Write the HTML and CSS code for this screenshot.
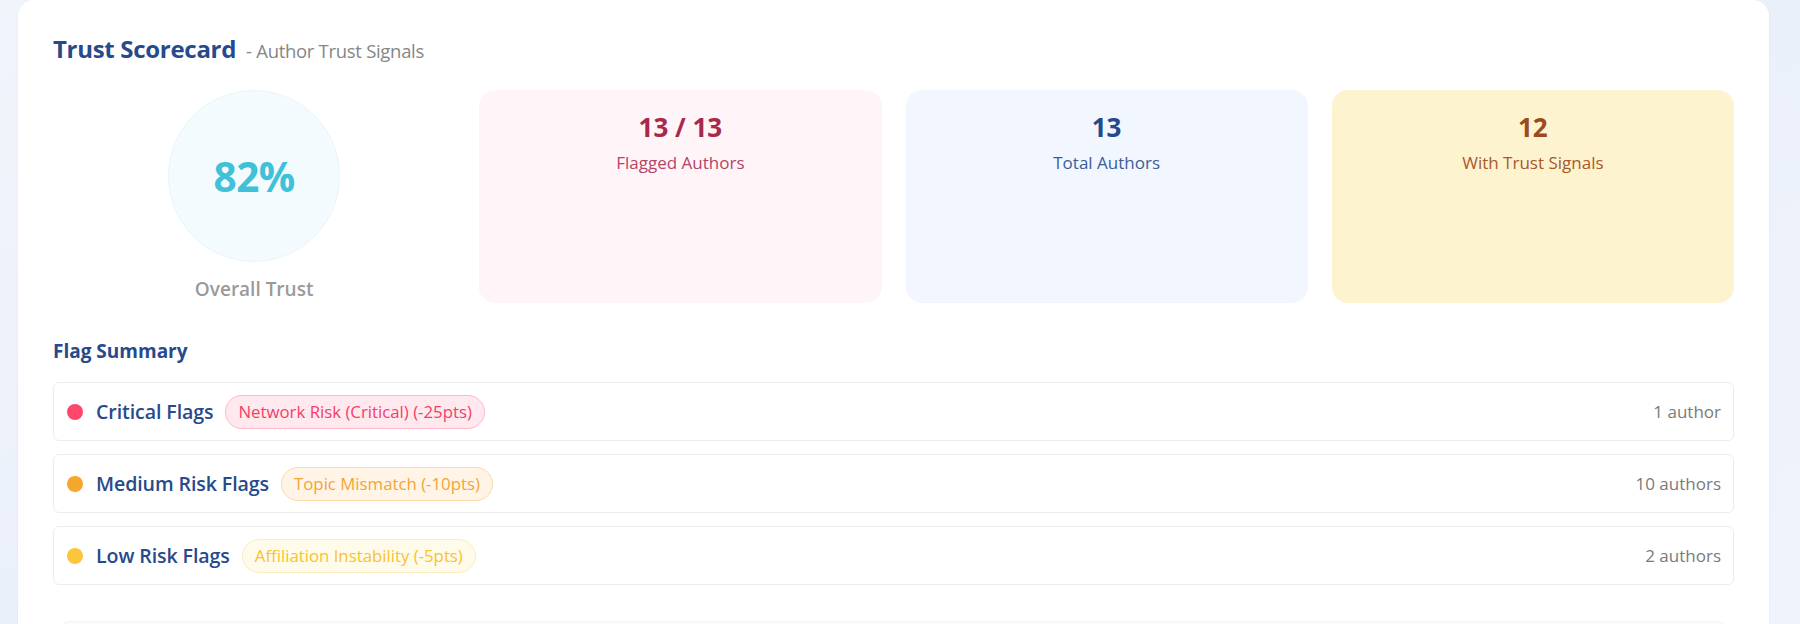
FILE: index.html
```html
<!DOCTYPE html>
<html lang="en">
<head>
<meta charset="utf-8">
<title>Trust Scorecard</title>
<link rel="stylesheet" href="styles.css">
</head>
<body>
<div class="page">
  <section class="card">
    <header class="card-head">
      <h2 class="title">Trust Scorecard</h2>
      <span class="subtitle">- Author Trust Signals</span>
    </header>

    <div class="stats">
      <div class="overall">
        <div class="ring"><span class="ring-value">82%</span></div>
        <div class="overall-label">Overall Trust</div>
      </div>
      <div class="stat stat-pink">
        <div class="stat-num">13 / 13</div>
        <div class="stat-label">Flagged Authors</div>
      </div>
      <div class="stat stat-blue">
        <div class="stat-num">13</div>
        <div class="stat-label">Total Authors</div>
      </div>
      <div class="stat stat-yellow">
        <div class="stat-num">12</div>
        <div class="stat-label">With Trust Signals</div>
      </div>
    </div>

    <h3 class="section-title">Flag Summary</h3>
    <div class="flags">
      <div class="flag-row">
        <span class="dot dot-critical"></span>
        <span class="flag-name">Critical Flags</span>
        <span class="badge badge-critical">Network Risk (Critical) (-25pts)</span>
        <span class="flag-count">1 author</span>
      </div>
      <div class="flag-row">
        <span class="dot dot-medium"></span>
        <span class="flag-name">Medium Risk Flags</span>
        <span class="badge badge-medium">Topic Mismatch (-10pts)</span>
        <span class="flag-count">10 authors</span>
      </div>
      <div class="flag-row">
        <span class="dot dot-low"></span>
        <span class="flag-name">Low Risk Flags</span>
        <span class="badge badge-low">Affiliation Instability (-5pts)</span>
        <span class="flag-count">2 authors</span>
      </div>
    </div>

    <div class="next-block"></div>
  </section>
</div>
</body>
</html>
```

FILE: styles.css
```css
* { box-sizing: border-box; }

html, body {
  margin: 0;
  padding: 0;
  height: 100%;
  overflow: hidden;
}

body {
  font-family: "Open Sans", "Noto Sans", sans-serif;
  background: linear-gradient(160deg, #f1f4fb 0%, #eaf0fa 50%, #f0f3fb 100%);
  color: #333;
}

.page {
  padding: 0 31px 0 18px;
}

.card {
  background: #fff;
  border-radius: 16px;
  padding: 34px 35px 0 35px;
  height: 700px;
  box-shadow: 0 1px 3px rgba(40, 70, 140, 0.05);
}

.card-head {
  display: flex;
  align-items: baseline;
  gap: 10px;
}

.title {
  margin: 0;
  font-size: 24px;
  line-height: 29px;
  font-weight: 700;
  color: #264a8b;
  letter-spacing: -0.3px;
}

.subtitle {
  font-size: 18.5px;
  color: #868686;
  letter-spacing: -0.3px;
}

.stats {
  margin-top: 27px;
  display: grid;
  grid-template-columns: repeat(4, 1fr);
  gap: 24px;
}

.overall {
  display: flex;
  flex-direction: column;
  align-items: center;
  gap: 14px;
}

.ring {
  width: 172px;
  height: 172px;
  border-radius: 50%;
  background: #f3fbfe;
  border: 1px solid #e9f5f9;
  display: flex;
  align-items: center;
  justify-content: center;
}

.ring-value {
  font-size: 40.5px;
  font-weight: 700;
  color: #3fc1d8;
  letter-spacing: -0.5px;
}

.overall-label {
  font-size: 19px;
  line-height: 27px;
  font-weight: 600;
  color: #9a9a9a;
}

.stat {
  border-radius: 16px;
  padding: 20px 16px;
  text-align: center;
}

.stat-num {
  font-size: 26px;
  line-height: 34px;
  font-weight: 700;
}

.stat-label {
  margin-top: 7px;
  font-size: 17px;
  line-height: 24px;
}

.stat-pink { background: #fff4f8; }
.stat-pink .stat-num { color: #a7294b; }
.stat-pink .stat-label { color: #b54566; }

.stat-blue { background: #f1f6ff; }
.stat-blue .stat-num { color: #244a8a; }
.stat-blue .stat-label { color: #3d5d95; }

.stat-yellow { background: #fdf3cf; }
.stat-yellow .stat-num { color: #9b4a1f; }
.stat-yellow .stat-label { color: #a8592a; }

.section-title {
  margin: 37px 0 0;
  font-size: 19px;
  line-height: 23px;
  font-weight: 700;
  color: #264a8b;
}

.flags {
  margin-top: 19px;
  display: flex;
  flex-direction: column;
  gap: 13px;
}

.flag-row {
  display: flex;
  align-items: center;
  height: 59px;
  padding: 0 12px 0 13px;
  border: 1px solid #ececec;
  border-radius: 6px;
}

.dot {
  width: 16px;
  height: 16px;
  border-radius: 50%;
  flex: none;
}

.dot-critical { background: #ff466b; }
.dot-medium { background: #f6a62b; }
.dot-low { background: #fcc63c; }

.flag-name {
  margin-left: 13px;
  font-size: 19.6px;
  font-weight: 600;
  color: #264a8b;
  letter-spacing: -0.1px;
}

.badge {
  margin-left: 12px;
  height: 34px;
  display: inline-flex;
  align-items: center;
  padding: 0 12px;
  border-radius: 17px;
  border: 1px solid;
  font-size: 16.8px;
}

.badge-critical {
  color: #f23f66;
  background: #ffe9ef;
  border-color: #ffb6c7;
}

.badge-medium {
  color: #f3a43a;
  background: #fff4e6;
  border-color: #fddaa9;
}

.badge-low {
  color: #f7c233;
  background: #fffbea;
  border-color: #fdedbb;
}

.flag-count {
  margin-left: auto;
  font-size: 17px;
  color: #7a7a7a;
}

.next-block {
  margin: 36px 7px 0;
  height: 80px;
  border-radius: 10px;
  background: #fafbfc;
  border: 1px solid #f3f4f6;
}
```
